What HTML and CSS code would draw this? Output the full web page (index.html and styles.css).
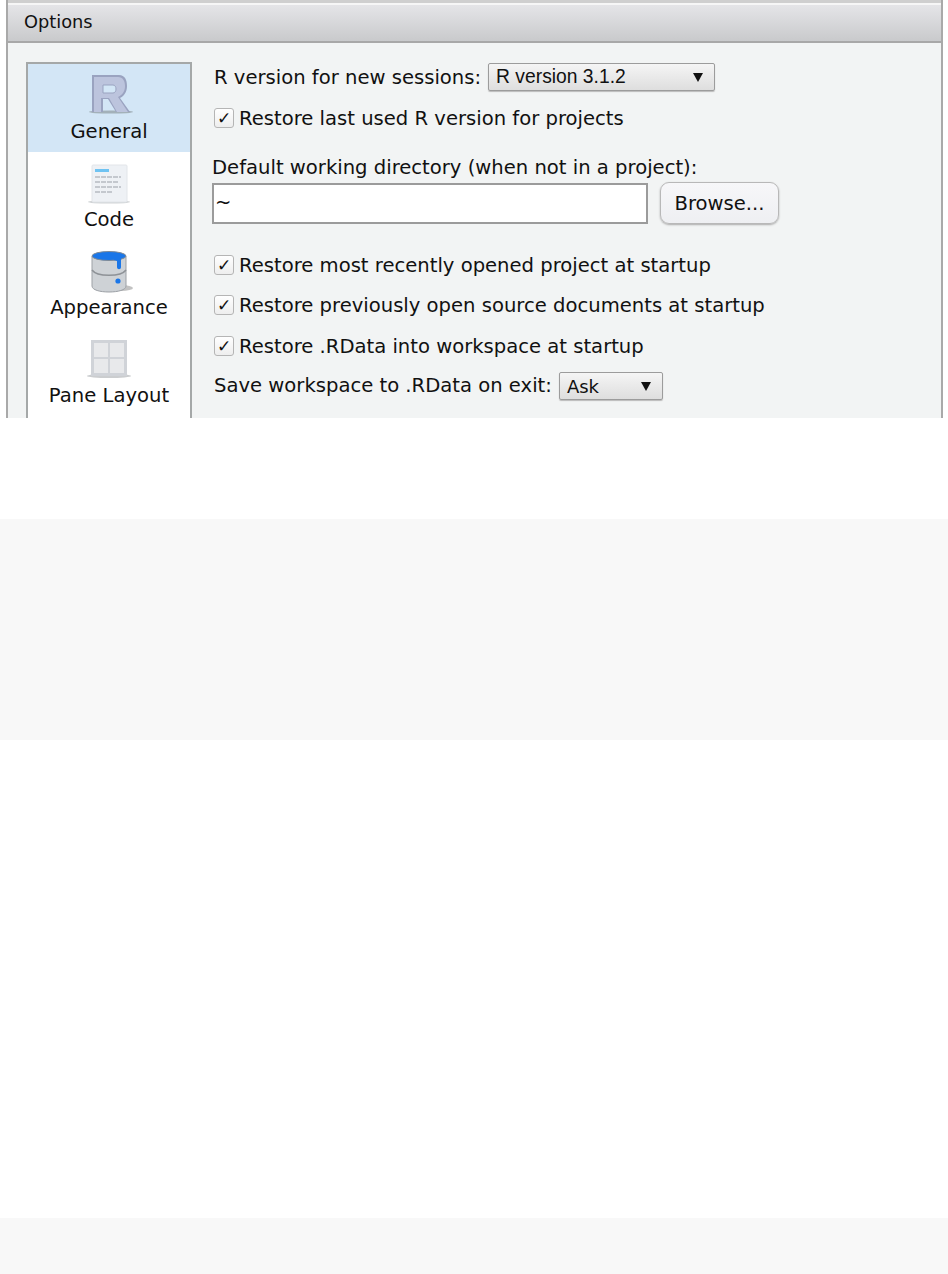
FILE: index.html
```html
<!DOCTYPE html>
<html lang="en">
<head>
    <meta charset="UTF-8">
    <title>Options</title>
    <link rel="stylesheet" href="styles.css">
</head>
<body>

    <!-- Options dialog, cropped at the bottom -->
    <div class="dialog">
        <div class="titlebar">Options</div>
        <div class="dialog-body">
            <div class="sidebar">
                <div class="nav-item selected">
                    <svg class="nav-icon" viewBox="0 0 48 44">
                        <ellipse cx="26" cy="38" rx="22" ry="1.6" fill="#8f9aa0" opacity="0.7"/>
                        <path d="M7 1H34C40 1 42 6 42 12C42 18 39 22 35 24L45 38H31L23 25H18V38H7Z" fill="#9aa3c0"/>
                        <path d="M9 3H33C38 3 40 7 40 12C40 18 37 21 33 23L43 38H32L24 24H16V38H9Z" fill="#bcc4dd"/>
                        <path d="M18 11H28C30 11 31 13 31 15C31 17 30 19 28 19H18Z" fill="#d3e6f6" stroke="#9aa3c0"/>
                    </svg>
                    <span>General</span>
                </div>
                <div class="nav-item">
                    <svg class="nav-icon" viewBox="0 0 48 44">
                        <ellipse cx="24" cy="40" rx="21" ry="1.6" fill="#c4c8ca" opacity="0.8"/>
                        <rect x="7" y="3" width="35" height="37" rx="1" fill="#eef1f5" stroke="#e2e5e9"/>
                        <rect x="10" y="7" width="14" height="3" fill="#6fc3f2"/>
                        <path d="M10 15H36M10 20H34M10 25H36M10 30H28" stroke="#b6bbc1" stroke-width="1.5" stroke-dasharray="5 1"/>
                    </svg>
                    <span>Code</span>
                </div>
                <div class="nav-item">
                    <svg class="nav-icon" viewBox="0 0 48 44">
                        <ellipse cx="36" cy="38" rx="12" ry="3" fill="#9a9a9a" opacity="0.6"/>
                        <path d="M7 6V36C7 40 15 42 24 42C33 42 41 40 41 36V6Z" fill="#ced2d6" stroke="#9da1a6"/>
                        <path d="M7 20C12 27 36 27 41 20" fill="none" stroke="#8e9297" stroke-width="1.5"/>
                        <ellipse cx="24" cy="6" rx="17" ry="4.5" fill="#1a76e8" stroke="#7f8a96"/>
                        <path d="M29 8H36V17C36 20 32 20 32 17V11L29 10Z" fill="#1a76e8"/>
                        <circle cx="33" cy="31" r="2.6" fill="#1a76e8"/>
                    </svg>
                    <span>Appearance</span>
                </div>
                <div class="nav-item">
                    <svg class="nav-icon" viewBox="0 0 48 44">
                        <ellipse cx="24" cy="38" rx="22" ry="2" fill="#b5b8ba" opacity="0.7"/>
                        <rect x="6" y="2" width="36" height="36" fill="#d0d3d8"/>
                        <rect x="9" y="5" width="14" height="14" fill="#e8e9eb"/>
                        <rect x="25" y="5" width="14" height="14" fill="#e8e9eb"/>
                        <rect x="9" y="21" width="14" height="14" fill="#e8e9eb"/>
                        <rect x="25" y="21" width="14" height="14" fill="#e8e9eb"/>
                    </svg>
                    <span>Pane Layout</span>
                </div>
            </div>

            <div class="panel">
                <div class="row version-row">
                    <span>R version for new sessions:</span>
                    <div class="select version-select"><span class="select-sans">R version 3.1.2</span><span class="arrow"></span></div>
                </div>
                <label class="check-row restore-version"><span class="checkbox">&#10003;</span>Restore last used R version for projects</label>

                <div class="dir-label">Default working directory (when not in a project):</div>
                <div class="dir-row">
                    <div class="text-input">~</div>
                    <div class="btn">Browse...</div>
                </div>

                <label class="check-row first-startup"><span class="checkbox">&#10003;</span>Restore most recently opened project at startup</label>
                <label class="check-row"><span class="checkbox">&#10003;</span>Restore previously open source documents at startup</label>
                <label class="check-row rdata-row"><span class="checkbox">&#10003;</span>Restore .RData into workspace at startup</label>
                <div class="row save-row">
                    <span>Save workspace to .RData on exit:</span>
                    <div class="select ask-select"><span>Ask</span><span class="arrow"></span></div>
                </div>
            </div>
        </div>
    </div>

    <div class="gap-one"></div>
    <div class="band band-one"></div>
    <div class="gap-two"></div>
    <div class="band band-two"></div>

</body>
</html>
```

FILE: styles.css
```css
html, body {
    margin: 0;
    padding: 0;
}
body {
    width: 948px;
    height: 1274px;
    overflow: hidden;
    background: white;
    font-family: "DejaVu Sans", sans-serif;
    font-size: 19.6px;
    color: #111;
    display: flex;
    flex-direction: column;
}
.dialog {
    width: 937px;
    height: 418px;
    margin-left: 6px;
    box-sizing: border-box;
    border-left: 2px solid #a9a9a9;
    border-right: 2px solid #a9a9a9;
    background: #f2f4f4;
    overflow: hidden;
    flex-shrink: 0;
}
.titlebar {
    height: 43px;
    box-sizing: border-box;
    padding: 2px 0 0 16px;
    border-top: 3px solid #cfcfcf;
    border-bottom: 2px solid #a8a8a8;
    box-shadow: inset 0 2px 0 #f6f6f6;
    background: linear-gradient(#e6e6e9, #c9cacc);
    font-size: 17.8px;
    line-height: 34px;
}
.dialog-body {
    display: flex;
    padding: 19px 0 0 18px;
}
.sidebar {
    width: 166px;
    height: 400px;
    box-sizing: border-box;
    border: 2px solid #a5a8a8;
    background: white;
    flex-shrink: 0;
}
.nav-item {
    height: 88px;
    display: flex;
    flex-direction: column;
    align-items: center;
    padding-top: 10px;
    box-sizing: border-box;
}
.nav-item.selected {
    background: #d3e6f6;
}
.nav-icon {
    width: 48px;
    height: 44px;
    margin-bottom: 2px;
    filter: blur(0.5px);
}
.panel {
    padding-left: 20px;
    flex-grow: 1;
}
.row {
    display: flex;
    align-items: center;
    padding-left: 2px;
}
.version-row {
    height: 30px;
}
.select {
    height: 28px;
    box-sizing: border-box;
    margin-left: 7px;
    padding: 0 11px 0 7px;
    display: flex;
    align-items: center;
    justify-content: space-between;
    border: 1px solid #9c9c9c;
    border-radius: 2px;
    box-shadow: 0 1px 1px #bbb;
    background: linear-gradient(#f5f5f5, #dedede);
    font-size: 18px;
}
.select-sans {
    font-family: "Liberation Sans", sans-serif;
    font-size: 19.3px;
}
.version-select {
    width: 227px;
}
.ask-select {
    width: 104px;
    margin-top: 2px;
}
.arrow {
    width: 0;
    height: 0;
    border-left: 5px solid transparent;
    border-right: 5px solid transparent;
    border-top: 9px solid #111;
}
.check-row {
    display: flex;
    align-items: center;
    height: 26px;
}
.restore-version {
    margin-top: 13px;
}
.checkbox {
    width: 20px;
    height: 20px;
    margin: 0 5px 0 2px;
    box-sizing: border-box;
    border: 1px solid #b5b5b5;
    border-radius: 3px;
    background: linear-gradient(#fff, #eee);
    display: flex;
    align-items: center;
    justify-content: center;
    font-size: 17px;
    line-height: 1;
    color: #111;
}
.dir-label {
    margin-top: 24px;
    height: 26px;
    line-height: 26px;
}
.dir-row {
    display: flex;
    align-items: center;
    margin-top: 1px;
}
.text-input {
    width: 436px;
    height: 41px;
    box-sizing: border-box;
    border: 2px solid #9b9b9b;
    background: white;
    padding-left: 1px;
    line-height: 36px;
}
.btn {
    width: 119px;
    height: 42px;
    margin-left: 12px;
    box-sizing: border-box;
    border: 1px solid #b8b8b8;
    border-radius: 9px;
    background: linear-gradient(#f7f7f9, #eeeff2);
    box-shadow: 0 1px 2px #aaa;
    display: flex;
    align-items: center;
    justify-content: center;
}
.first-startup {
    margin-top: 28px;
}
.check-row + .check-row {
    margin-top: 14px;
}
.check-row.rdata-row {
    margin-top: 15px;
}
.save-row {
    height: 28px;
    margin-top: 12px;
}
.gap-one {
    height: 101px;
    flex-shrink: 0;
}
.band {
    background: #f8f8f8;
    flex-shrink: 0;
}
.band-one {
    height: 221px;
}
.gap-two {
    height: 478px;
    flex-shrink: 0;
}
.band-two {
    height: 56px;
}
```
